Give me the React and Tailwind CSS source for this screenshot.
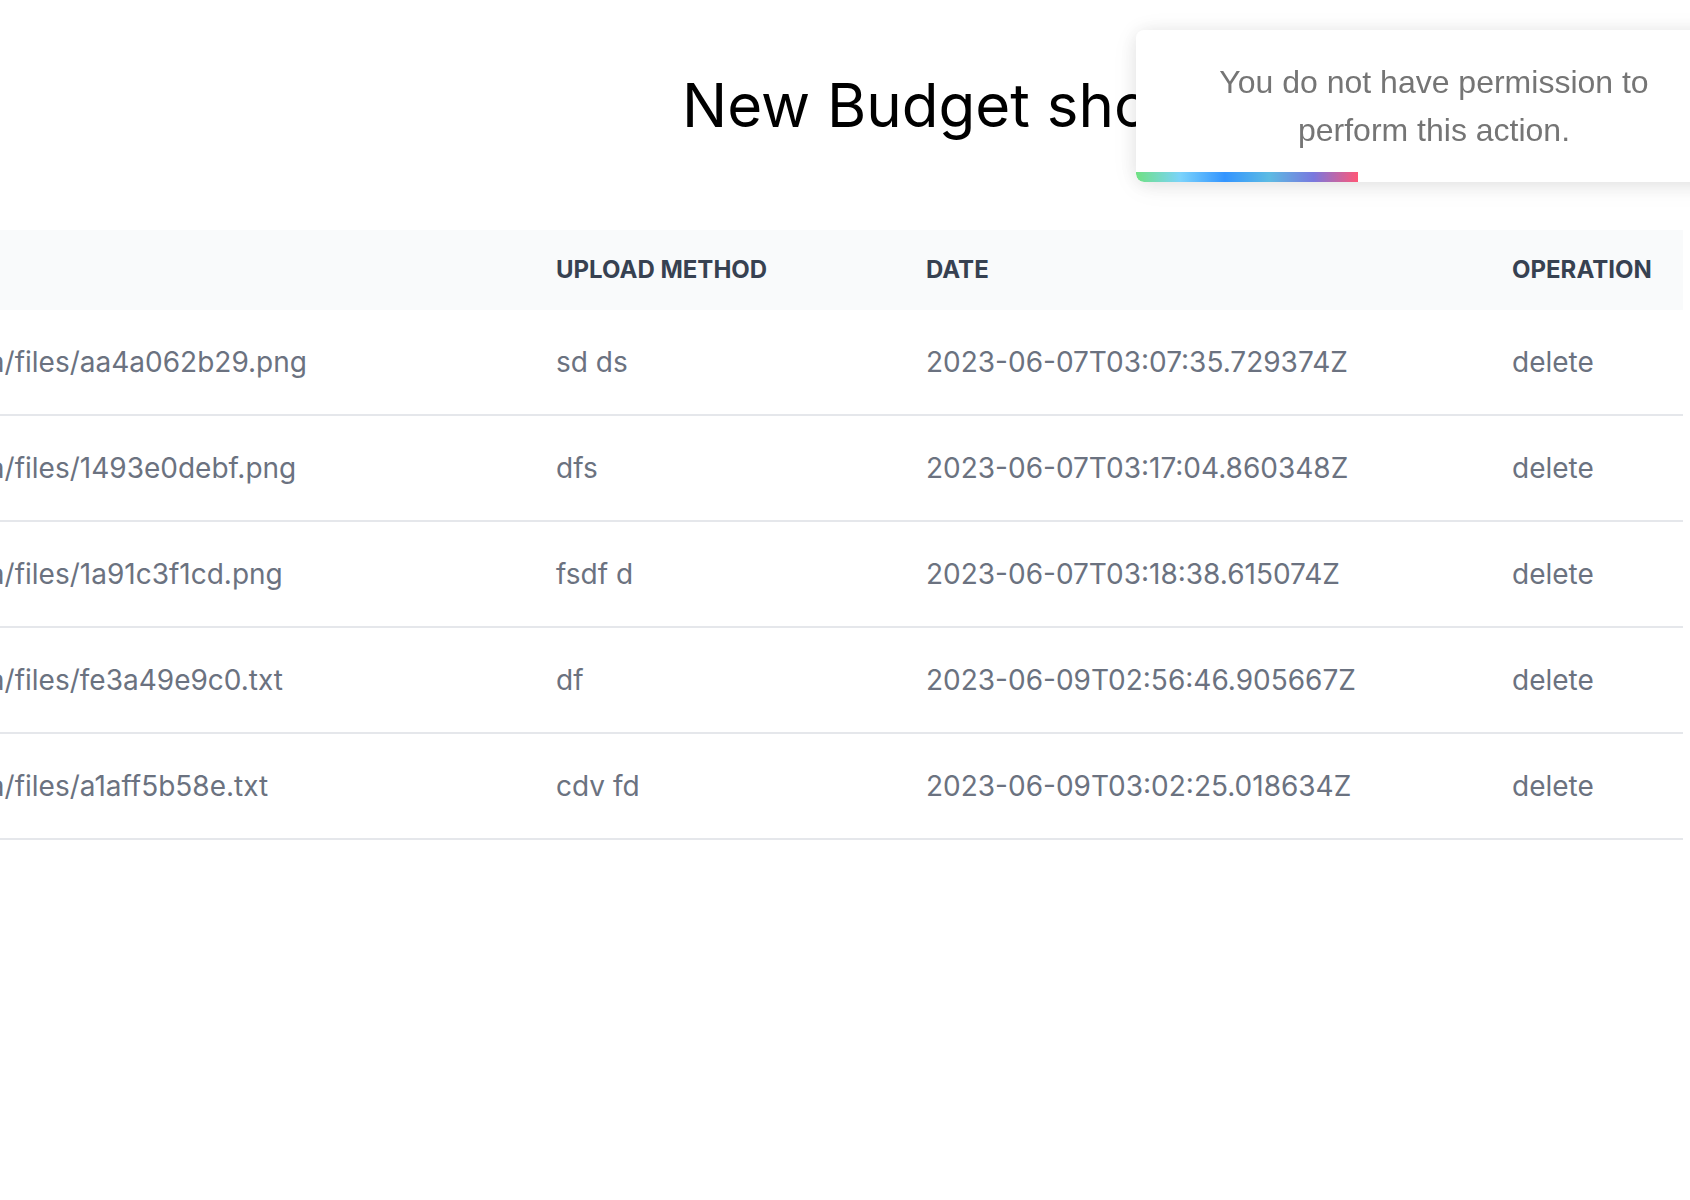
export default function App() {
  const rows = [
    ["aa4a062b29.png", "sd ds", "2023-06-07T03:07:35.729374Z"],
    ["1493e0debf.png", "dfs", "2023-06-07T03:17:04.860348Z"],
    ["1a91c3f1cd.png", "fsdf d", "2023-06-07T03:18:38.615074Z"],
    ["fe3a49e9c0.txt", "df", "2023-06-09T02:56:46.905667Z"],
    ["a1aff5b58e.txt", "cdv fd", "2023-06-09T03:02:25.018634Z"],
  ];
  return (
    <div className="relative w-[1690px] h-[1200px] overflow-hidden bg-white font-['Inter',sans-serif]">
      <h1 className="pt-[69px] pl-[682px] text-[60px] leading-[72px] font-normal text-black whitespace-nowrap">
        New Budget shop
      </h1>
      <div className="mt-[89px] ml-[-134px] w-[1817px]">
        <table className="w-full table-fixed border-collapse">
          <colgroup>
            <col className="w-[642px]" />
            <col className="w-[370px]" />
            <col className="w-[586px]" />
            <col className="w-[219px]" />
          </colgroup>
          <thead>
            <tr className="bg-[#f9fafb]">
              <th className="px-[48px] py-[24px] text-left text-[24px] leading-[32px] font-bold uppercase text-[#374151]">File</th>
              <th className="px-[48px] py-[24px] text-left text-[24px] leading-[32px] font-bold uppercase text-[#374151] whitespace-nowrap">Upload Method</th>
              <th className="px-[48px] py-[24px] text-left text-[24px] leading-[32px] font-bold uppercase text-[#374151]">Date</th>
              <th className="px-[48px] py-[24px] text-left text-[24px] leading-[32px] font-bold uppercase text-[#374151]">Operation</th>
            </tr>
          </thead>
          <tbody>
            {rows.map((r) => (
              <tr key={r[0]} className="border-b-2 border-[#e5e7eb]">
                <td className="px-[48px] py-[32px] text-[28px] leading-[40px] text-[#6b7280] whitespace-nowrap">/media/files/{r[0]}</td>
                <td className="px-[48px] py-[32px] text-[28px] leading-[40px] text-[#6b7280] whitespace-nowrap">{r[1]}</td>
                <td className="px-[48px] py-[32px] text-[28px] leading-[40px] text-[#6b7280] whitespace-nowrap">{r[2]}</td>
                <td className="px-[48px] py-[32px] text-[28px] leading-[40px] text-[#6b7280] whitespace-nowrap">delete</td>
              </tr>
            ))}
          </tbody>
        </table>
      </div>

      <div className="fixed top-[30px] left-[1136px] w-[640px] rounded-[8px] bg-white p-[16px] shadow-[0_2px_20px_0_rgba(0,0,0,0.1),0_4px_30px_0_rgba(0,0,0,0.05)] overflow-hidden">
        <div className="ml-[22px] w-[520px] py-[12px] text-center font-['Liberation_Sans',Arial,sans-serif] text-[32px] leading-[48px] text-[#757575]">
          You do not have permission to perform this action.
        </div>
        <div className="absolute bottom-0 left-0 h-[10px] w-[222px] rounded-bl-[8px] opacity-80 bg-[linear-gradient(to_right,#4cd964,#5ac8fa,#007aff,#34aadc,#5856d6,#ff2d55)]" />
      </div>
    </div>
  );
}
